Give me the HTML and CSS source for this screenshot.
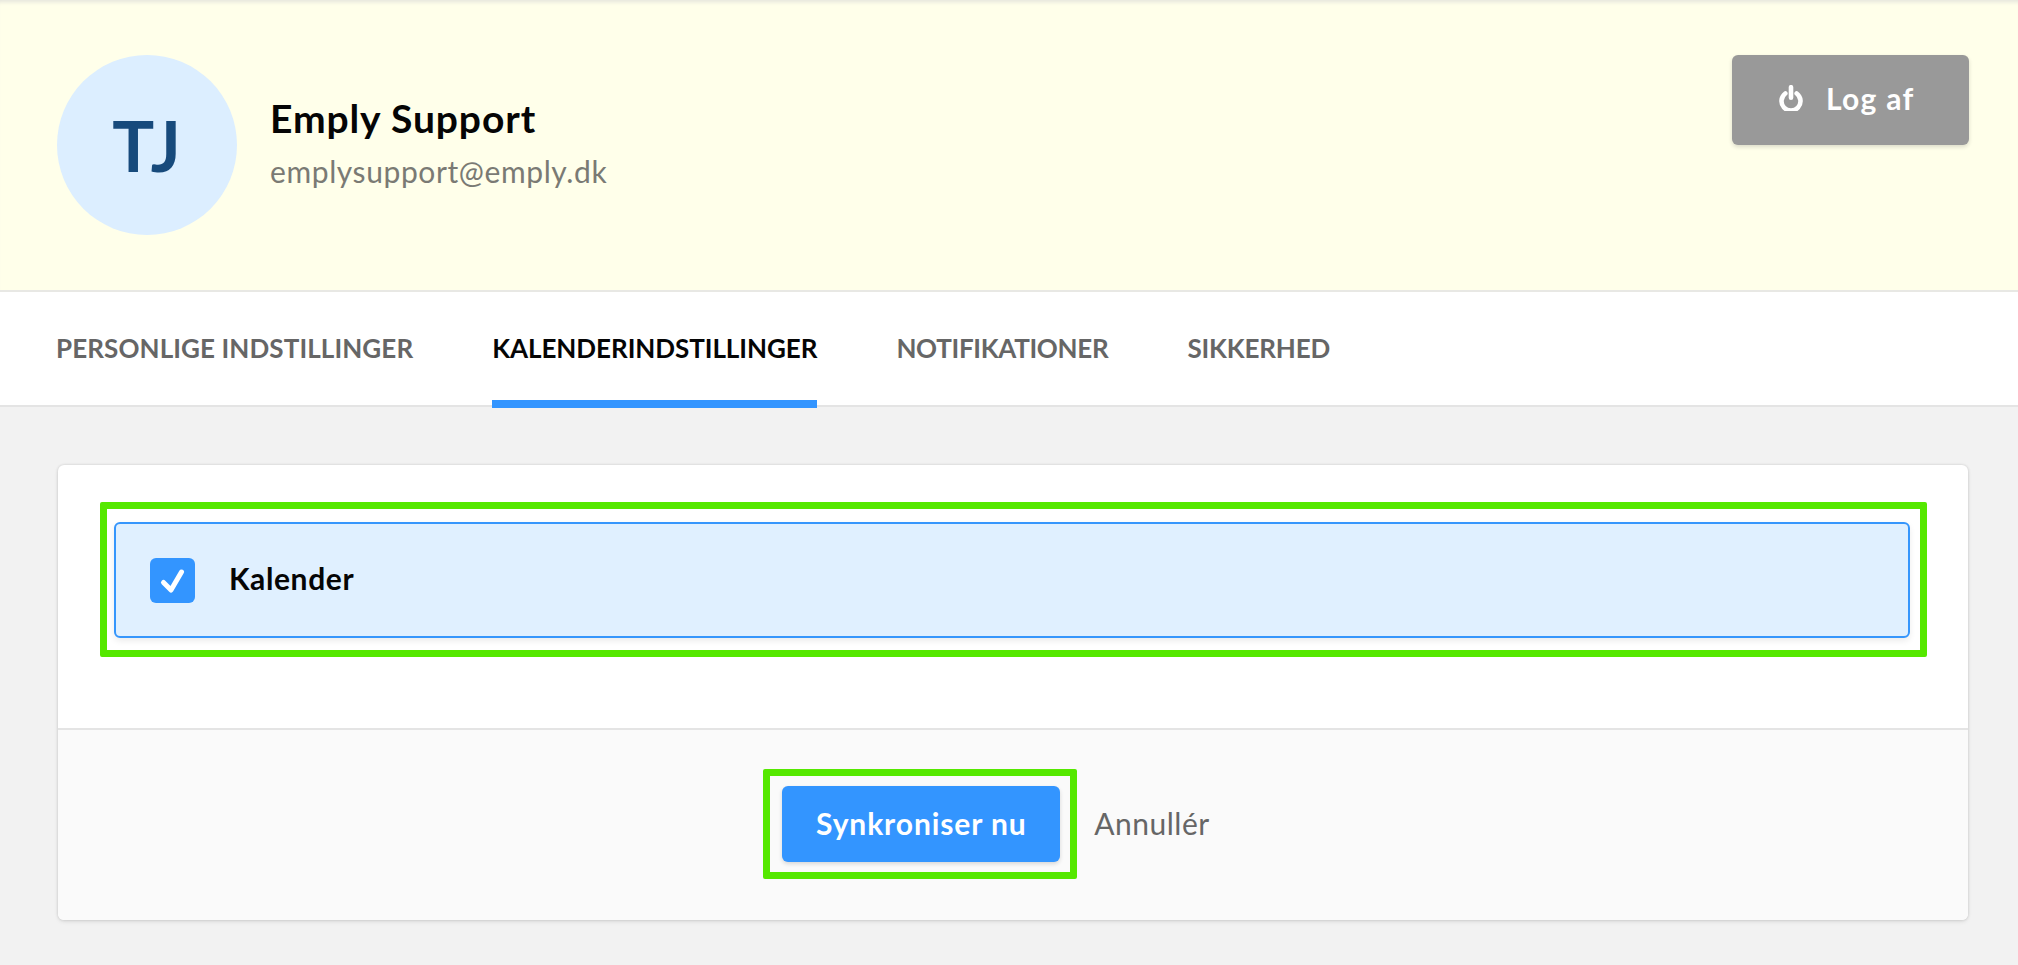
FILE: index.html
```html
<!DOCTYPE html>
<html lang="da">
<head>
<meta charset="utf-8">
<title>Kalenderindstillinger</title>
<link rel="stylesheet" href="styles.css">
</head>
<body>
<header class="profile">
  <div class="avatar">TJ</div>
  <div class="identity">
    <div class="name">Emply Support</div>
    <div class="email">emplysupport@emply.dk</div>
  </div>
  <button class="logout">
    <svg class="power" width="24" height="26" viewBox="0 0 24 26"><path d="M6.300 8.500a9.500 9.500 0 1 0 11.400 0M12 2.200v10.500" fill="none" stroke="#fff" stroke-width="4.600" stroke-linecap="round"/></svg>
    <span>Log af</span>
  </button>
</header>
<nav class="tabs">
  <a class="tab">PERSONLIGE INDSTILLINGER</a>
  <a class="tab active">KALENDERINDSTILLINGER</a>
  <a class="tab">NOTIFIKATIONER</a>
  <a class="tab">SIKKERHED</a>
</nav>
<main class="content">
  <section class="card">
    <div class="card-body">
      <label class="option highlight highlight-wide">
        <span class="checkbox">
          <svg width="45" height="45" viewBox="0 0 45 45"><path d="M13.500 24.500l7.500 7.500L31.500 14" fill="none" stroke="#fff" stroke-width="5" stroke-linecap="round" stroke-linejoin="round"/></svg>
        </span>
        <span class="option-label">Kalender</span>
      </label>
    </div>
    <div class="card-footer">
      <button class="primary highlight highlight-button">Synkroniser nu</button>
      <a class="cancel">Annullér</a>
    </div>
  </section>
</main>
</body>
</html>
```
FILE: styles.css
```css
* { box-sizing: border-box; }
html, body { height: 100%; }
body {
  margin: 0;
  background: #f2f2f2;
  font-family: "Lato", "Open Sans", sans-serif;
  overflow: hidden;
}
.profile {
  height: 292px;
  display: flex;
  align-items: flex-start;
  padding: 55px 49px 0 57px;
  background: #ffffea;
  border-bottom: 2px solid #e8e8e4;
  box-shadow: inset 0 5px 4px -3px #e4e4dc;
}
.avatar {
  width: 180px;
  height: 180px;
  flex: none;
  border-radius: 50%;
  background: #dceeff;
  color: #174a7c;
  font-size: 70px;
  font-weight: 700;
  letter-spacing: 1px;
  display: flex;
  align-items: center;
  justify-content: center;
}
.identity { margin-left: 33px; flex: 1; padding-top: 39px; }
.name { font-size: 39px; line-height: 48px; font-weight: 700; letter-spacing: .9px; color: #050505; }
.email { font-size: 30px; line-height: 36px; margin-top: 11px; letter-spacing: .6px; color: #7a7a74; }
.logout {
  width: 237px;
  height: 90px;
  border: 0;
  border-radius: 6px;
  background: #999;
  color: #fff;
  font: 700 30px "Lato", sans-serif;
  letter-spacing: 1.3px;
  display: flex;
  align-items: center;
  justify-content: flex-start;
  gap: 23px;
  padding: 0 0 4px 47px;
  box-shadow: 0 2px 4px rgba(0,0,0,.14);
}
.tabs {
  height: 115px;
  background: #fff;
  border-bottom: 2px solid #e4e4e4;
  display: flex;
  gap: 79px;
  padding-left: 56px;
}
.tab {
  height: 116px;
  line-height: 112px;
  font-size: 26px;
  font-weight: 700;
  color: #666;
  white-space: nowrap;
}
.tab:nth-child(1) { letter-spacing: .1px; }
.tab:nth-child(2) { letter-spacing: -.05px; }
.tab:nth-child(3) { letter-spacing: -.3px; }
.tab:nth-child(4) { letter-spacing: -.15px; }
.tab.active { color: #050505; border-bottom: 8px solid #3395ff; }
.content { padding: 58px 50px 0 58px; }
.card {
  height: 455px;
  background: #fff;
  border-radius: 6px;
  box-shadow: 0 0 3px rgba(0,0,0,.16), 0 2px 4px rgba(0,0,0,.08);
  overflow: hidden;
  display: flex;
  flex-direction: column;
}
.card-body { height: 263px; padding: 57px 58px 0 56px; }
.option {
  height: 116px;
  display: flex;
  align-items: center;
  padding-left: 34px;
  background: #e0f0ff;
  border: 2px solid #3696fc;
  border-radius: 6px;
  box-shadow: 0 3px 6px rgba(0,0,0,.08);
}
.checkbox {
  width: 45px;
  height: 45px;
  background: #3395ff;
  border-radius: 6px;
  flex: none;
  display: block;
}
.checkbox svg { display: block; }
.option-label { margin: 0 0 5px 34px; font-size: 30px; font-weight: 700; letter-spacing: .6px; color: #050505; }
.card-footer {
  flex: 1;
  background: #fafafa;
  border-top: 2px solid #e4e4e4;
  display: flex;
  align-items: center;
  justify-content: center;
  padding-bottom: 3px;
}
.primary {
  width: 278px;
  height: 76px;
  border: 0;
  border-radius: 6px;
  background: #3395ff;
  color: #fff;
  font: 700 30px "Lato", sans-serif;
  letter-spacing: .9px;
  padding: 0 0 2px;
  box-shadow: 0 2px 4px rgba(0,0,0,.14);
}
.cancel { padding: 0 34px 2px; font-size: 30px; letter-spacing: .5px; color: #666; }
.highlight { position: relative; }
.highlight::after {
  content: "";
  position: absolute;
  border: 7px solid #55e800;
  border-radius: 2px;
  pointer-events: none;
}
.highlight-wide::after { inset: -22px -19px -21px -16px; }
.highlight-button::after { inset: -17px -17px -17px -19px; }
```
